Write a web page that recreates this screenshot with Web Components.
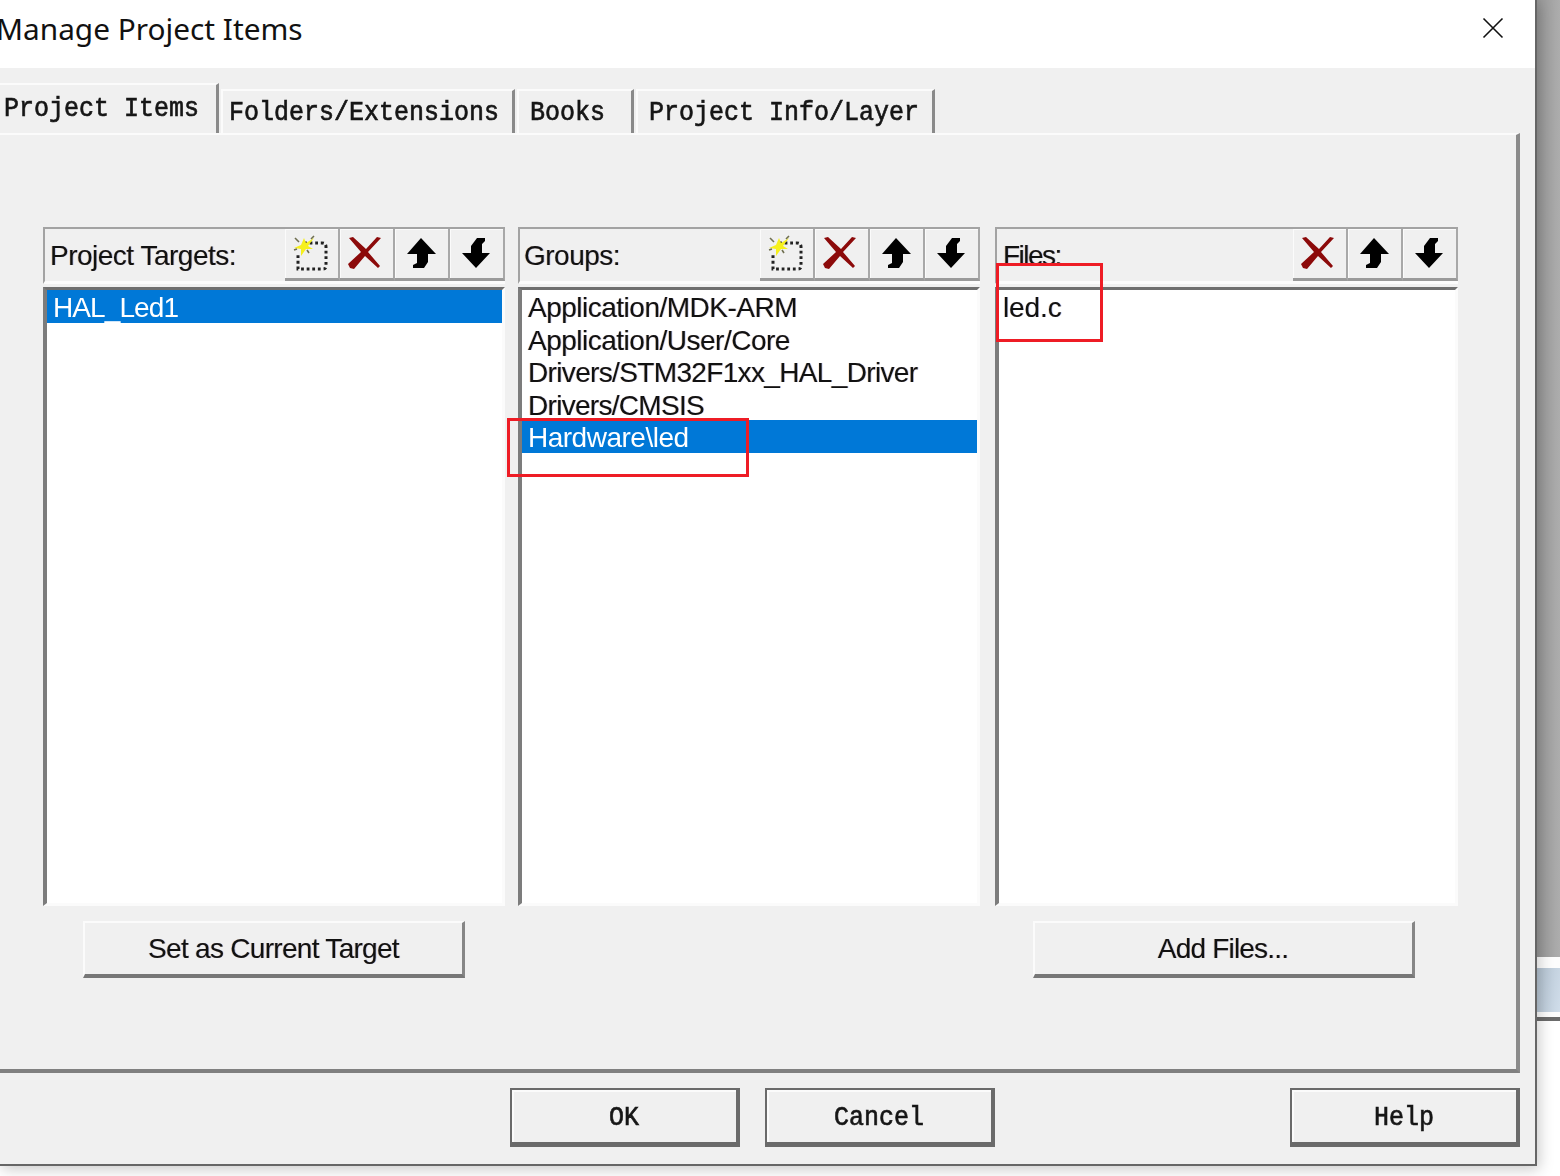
<!DOCTYPE html>
<html>
<head>
<meta charset="utf-8">
<title>Manage Project Items</title>
<style>
  html, body { margin: 0; width: 1560px; height: 1176px; overflow: hidden; background: #fff; }
</style>
</head>
<body>
<manage-dialog>
  <dlg-tab active>Project Items</dlg-tab>
  <dlg-tab style="width:294px;--tab-pad:6px">Folders/Extensions</dlg-tab>
  <dlg-tab style="width:117px;--tab-pad:11px">Books</dlg-tab>
  <dlg-tab style="width:299px;--tab-pad:11px">Project Info/Layer</dlg-tab>

  <list-pane slot="panes" label="Project Targets:" tools="new del up down" style="--label-x:7px;--item-x:10px">
    <list-row selected style="letter-spacing:-.9px">HAL_Led1</list-row>
    <dlg-button slot="action" style="letter-spacing:-.7px">Set as Current Target</dlg-button>
  </list-pane>
  <list-pane slot="panes" label="Groups:" tools="new del up down" style="--label-x:6px;--item-x:10px">
    <list-row>Application/MDK-ARM</list-row>
    <list-row>Application/User/Core</list-row>
    <list-row style="letter-spacing:-.65px">Drivers/STM32F1xx_HAL_Driver</list-row>
    <list-row style="letter-spacing:-.7px">Drivers/CMSIS</list-row>
    <list-row selected>Hardware\led</list-row>
  </list-pane>
  <list-pane slot="panes" label="Files:" tools="del up down" style="--label-x:8px;--item-x:8px;--action-shift:-6px;--label-ls:-1.5px;margin-left:2px;width:463px">
    <list-row style="letter-spacing:-.1px">led.c</list-row>
    <dlg-button slot="action" style="letter-spacing:-.8px">Add Files...</dlg-button>
  </list-pane>

  <dlg-button slot="footer" mono style="margin-left:510px">OK</dlg-button>
  <dlg-button slot="footer" mono style="margin-left:25px">Cancel</dlg-button>
  <dlg-button slot="footer" mono style="margin-left:295px">Help</dlg-button>
</manage-dialog>
<note-box style="left:996px;top:263px;width:107px;height:79px"></note-box>
<note-box style="left:507px;top:418px;width:242px;height:59px"></note-box>

<script>
// toolbar glyphs, drawn in the button's own pixels
const TOOL_ICONS = {
  new: `<path d="M19 14H37Q41 14 41 18V37Q41 40 38 40H13V24" fill="none" stroke="#222" stroke-width="3" stroke-dasharray="2.8 2.8"/>
        <path d="M19 9l2 5 8-5-6 8 5 3-7 0-5 7 0-7-7-1 7-3z" fill="#f6f01c"/>
        <path d="M10 9l4 4M29 7l-3 3M9 21l3-1M22 21l2 3" stroke="#6f6f50" stroke-width="1.6"/>`,
  del: `<path d="M9 9L13 8L26 20L37 8L41 9L28 23L40 37L38 39L25 27L14 40L10 39L8 35L21 23Z" fill="#8c0a0a"/>`,
  up: `<path d="M26 9L41 25H33V33L29 39H18V36L22 34V25H12Z" fill="#000"/>`,
  down: `<path d="M26 39L12 24H21V17L27 9H35V12L32 15V24H40Z" fill="#000"/>`
};

class ManageDialog extends HTMLElement {
  constructor() {
    super();
    this.attachShadow({ mode: 'open' });
    this.shadowRoot.innerHTML = `
      <style>
        :host { display: flex; width: 1560px; height: 1176px; align-items: flex-start; }
        .win {
          box-sizing: border-box; width: 1537px; height: 1166px; flex: none;
          display: flex; flex-direction: column; position: relative; z-index: 1;
          background: #f0f0f0; border-right: 2px solid #666; border-bottom: 2px solid #666;
          box-shadow: 2px 3px 14px rgba(0,0,0,.22);
        }
        .title {
          height: 68px; flex: none; background: #fff; display: flex; align-items: center;
          justify-content: space-between; padding-right: 31px; overflow: hidden;
        }
        .title span { font: 29.8px "Noto Sans", sans-serif; color: #111; margin: -12px 0 0 -4px; white-space: nowrap; }
        .title svg { margin-top: -13px; }
        .body { flex: 1; display: flex; flex-direction: column; filter: blur(.5px); }
        .tabs { height: 65px; flex: none; display: flex; align-items: flex-end; padding-top: 16px; box-sizing: border-box; }
        .panel {
          box-sizing: border-box; width: 1520px; height: 940px; flex: none;
          border-top: 2px solid #fbfbfb; border-right: 4px solid #8a8a8a; border-bottom: 4px solid #808080;
          padding: 92px 0 0 43px;
        }
        .panes { display: flex; gap: 13px; }
        .foot { flex: 1; display: flex; padding-top: 15px; box-sizing: border-box; }
        .side { flex: 1; height: 1021px; display: flex; flex-direction: column; }
        .side i { display: block; flex: none; }
      </style>
      <div class="win">
        <div class="title">
          <span>Manage Project Items</span>
          <svg width="22" height="22" viewBox="0 0 22 22"><path d="M1.5 1.5L20.5 20.5M20.5 1.5L1.5 20.5" stroke="#111" stroke-width="1.6"/></svg>
        </div>
        <div class="body">
          <div class="tabs"><slot></slot></div>
          <div class="panel"><div class="panes"><slot name="panes"></slot></div></div>
          <div class="foot"><slot name="footer"></slot></div>
        </div>
      </div>
      <div class="side">
        <i style="height:957px;background:linear-gradient(90deg,#979797,#adadad)"></i>
        <i style="height:11px;background:#fdfdfd"></i>
        <i style="height:44px;background:linear-gradient(100deg,#b3c2d0,#d0ddea)"></i>
        <i style="height:5px;background:#fdfdfd"></i>
        <i style="height:4px;background:#6b6b6b"></i>
      </div>`;
  }
}

// tall bitmap-looking slab text shared by the tabs and the footer buttons
const MONO_TEXT = `
  .mono {
    display: inline-block; transform: scaleY(1.08);
    font: 25px "Liberation Mono", monospace; letter-spacing: 0; color: #161616;
    -webkit-text-stroke: .6px #161616; white-space: nowrap;
  }`;

class DlgTab extends HTMLElement {
  constructor() {
    super();
    this.attachShadow({ mode: 'open' });
    this.shadowRoot.innerHTML = `
      <style>
        :host {
          display: block; box-sizing: border-box; height: 44px; width: 299px; margin-left: 2px; flex: none;
          border-top: 2px solid #fbfbfb; border-left: 2px solid #fbfbfb; border-right: 3px solid #8a8a8a;
          padding: 7px 0 0 var(--tab-pad, 7px); line-height: 28px;
        }
        :host([active]) {
          height: 50px; width: 219px; margin-left: 0; border-left: 0; padding: 9px 0 0 4px;
        }
        ${MONO_TEXT}
      </style>
      <span class="mono"><slot></slot></span>`;
  }
}

class ListPane extends HTMLElement {
  constructor() {
    super();
    this.attachShadow({ mode: 'open' });
    this.shadowRoot.innerHTML = `
      <style>
        :host {
          display: block; width: 462px; flex: none; font: 28px "Liberation Sans", sans-serif; letter-spacing: -.5px; color: #111;
          text-shadow: -.7px 0 rgba(230,130,20,.3), .7px 0 rgba(20,70,220,.3);
        }
        .head {
          box-sizing: border-box; height: 57px; display: flex; justify-content: space-between;
          border-top: 2px solid #a3a3a3; border-left: 2px solid #a3a3a3; border-bottom: 3px solid #fbfbfb;
        }
        .label { line-height: 54px; padding-left: var(--label-x); margin-left: -2px; white-space: nowrap; letter-spacing: var(--label-ls, -.5px); }
        .tools { display: flex; height: 52px; }
        .list {
          box-sizing: border-box; height: 619px; margin-top: 3px; background: #fff; overflow: hidden;
          border-top: 3px solid #6e6e6e; border-left: 4px solid #7c7c7c;
          border-right: 3px solid #fbfbfb; border-bottom: 3px solid #fbfbfb;
          --row-x: calc(var(--item-x) - 4px);
        }
        .action { display: flex; justify-content: center; margin: 15px 0 0 var(--action-shift, 0); min-height: 57px; }
      </style>
      <div class="head">
        <div class="label"></div>
        <div class="tools"></div>
      </div>
      <div class="list"><slot></slot></div>
      <div class="action"><slot name="action"></slot></div>`;
  }

  connectedCallback() {
    this.shadowRoot.querySelector('.label').textContent = this.getAttribute('label');
    const tools = this.shadowRoot.querySelector('.tools');
    tools.innerHTML = '';
    for (const kind of this.getAttribute('tools').split(' ')) {
      const btn = document.createElement('tool-btn');
      btn.setAttribute('kind', kind);
      tools.appendChild(btn);
    }
  }
}

class ListRow extends HTMLElement {
  constructor() {
    super();
    this.attachShadow({ mode: 'open' });
    this.shadowRoot.innerHTML = `
      <style>
        :host { display: block; height: 32.6px; line-height: 35px; padding-left: var(--row-x); white-space: nowrap; }
        :host([selected]) { background: #0078d7; color: #fff; text-shadow: none; }
      </style>
      <slot></slot>`;
  }
}

class ToolBtn extends HTMLElement {
  constructor() {
    super();
    this.attachShadow({ mode: 'open' });
    this.shadowRoot.innerHTML = `
      <style>
        :host {
          display: block; box-sizing: border-box; width: 55px; height: 52px; flex: none;
          border-right: 2px solid #a8a8a8; border-bottom: 3px solid #9a9a9a;
          box-shadow: inset 1px 1px 0 #fbfbfb;
        }
        svg { display: block; }
      </style>
      <svg width="54" height="52" viewBox="0 0 54 52"></svg>`;
  }

  connectedCallback() {
    this.shadowRoot.querySelector('svg').innerHTML = TOOL_ICONS[this.getAttribute('kind')] || '';
  }
}

class DlgButton extends HTMLElement {
  constructor() {
    super();
    this.attachShadow({ mode: 'open' });
    this.shadowRoot.innerHTML = `
      <style>
        :host {
          display: flex; align-items: center; justify-content: center; box-sizing: border-box;
          width: 382px; height: 57px; flex: none; padding-top: 1px;
          border-top: 2px solid #fbfbfb; border-left: 2px solid #fbfbfb;
          border-right: 3px solid #868686; border-bottom: 4px solid #777;
          font: 28px "Liberation Sans", sans-serif; letter-spacing: -.5px; color: #111;
        }
        :host([mono]) {
          width: 230px; height: 59px; padding-top: 3px;
          border: 2px solid #6a6a6a; border-right-width: 4px; border-bottom-width: 5px;
          box-shadow: inset 2px 2px 0 #fbfbfb;
        }
        :host(:not([mono])) .mono { all: unset; }
        ${MONO_TEXT}
      </style>
      <span class="mono"><slot></slot></span>`;
  }
}

class NoteBox extends HTMLElement {
  constructor() {
    super();
    this.attachShadow({ mode: 'open' });
    this.shadowRoot.innerHTML = `
      <style>
        :host { display: block; position: absolute; box-sizing: border-box; border: 3px solid #ee1c25; z-index: 2; }
      </style>`;
  }
}

customElements.define('manage-dialog', ManageDialog);
customElements.define('dlg-tab', DlgTab);
customElements.define('list-pane', ListPane);
customElements.define('list-row', ListRow);
customElements.define('tool-btn', ToolBtn);
customElements.define('dlg-button', DlgButton);
customElements.define('note-box', NoteBox);
</script>
</body>
</html>
